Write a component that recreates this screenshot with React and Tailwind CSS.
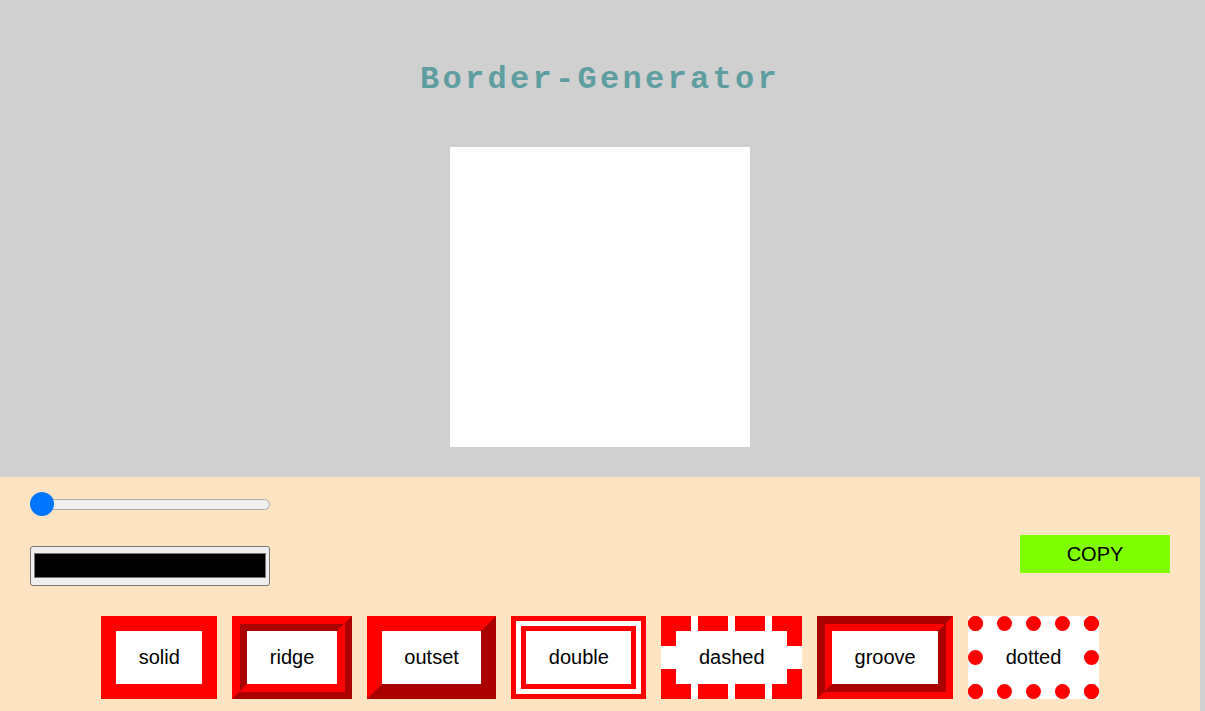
import React from "react";

const styles = [
  { name: "solid", cls: "border-solid" },
  { name: "ridge", cls: "[border-style:ridge]" },
  { name: "outset", cls: "[border-style:outset]" },
  { name: "double", cls: "border-double" },
  { name: "dashed", cls: "border-dashed" },
  { name: "groove", cls: "[border-style:groove]" },
  { name: "dotted", cls: "border-dotted" },
];

export default function App() {
  return (
    <div className="min-h-screen w-full bg-[#d0d0d0] font-['Liberation_Sans',Arial,sans-serif]">
      <div className="w-[1200px] flex flex-col items-center pt-[62px]">
        <h1 className="font-['Liberation_Mono','Courier_New',monospace] font-bold text-[32px] leading-[36px] tracking-[3.3px] text-[#5f9ea0]">
          Border-Generator
        </h1>
        <div className="mt-[49px] mb-[30px] w-[300px] h-[300px] bg-white"></div>
      </div>
      <div className="w-[1200px] bg-[#ffe4c4] pb-[30px]">
        <div className="flex justify-between items-start px-[30px]">
          <div className="flex flex-col pt-[15px]">
            <div className="relative w-[240px] h-[24px] flex items-center">
              <div className="w-full h-[11px] rounded-full bg-[#efefef] border border-[#aaaaaa]"></div>
              <div className="absolute left-0 top-0 w-[24px] h-[24px] rounded-full bg-[#0075ff]"></div>
            </div>
            <div className="mt-[30px] w-[240px] h-[40px] bg-[#efefef] border border-[#767676] rounded-[3px] px-[3px] pt-[6px] pb-[7px]">
              <div className="w-full h-full bg-black border border-[#777777]"></div>
            </div>
          </div>
          <button className="mt-[58px] w-[150px] h-[38px] bg-[#7fff00] text-[20px] text-black">
            COPY
          </button>
        </div>
        <div className="mt-[30px] flex justify-center gap-[15px]">
          {styles.map((s) => (
            <button
              key={s.name}
              className={`bg-white text-black text-[20px] leading-[23px] px-[22.5px] py-[15px] border-[15px] border-[#ff0000] ${s.cls}`}
            >
              {s.name}
            </button>
          ))}
        </div>
      </div>
    </div>
  );
}
